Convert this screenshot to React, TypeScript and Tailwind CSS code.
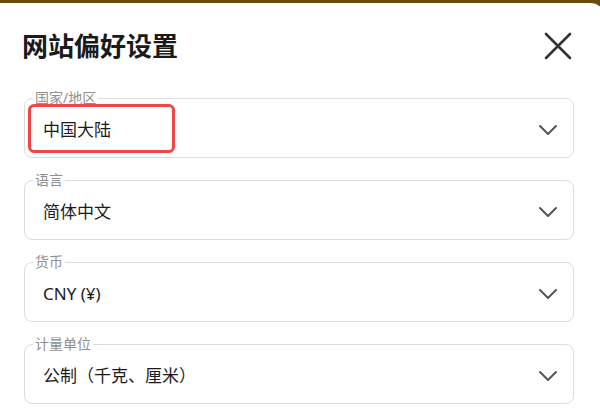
import React from 'react';

type Field = {
  label: string;
  value: string;
  highlight?: boolean;
};

const fields: Field[] = [
  { label: '国家/地区', value: '中国大陆', highlight: true },
  { label: '语言', value: '简体中文' },
  { label: '货币', value: 'CNY (¥)' },
  { label: '计量单位', value: '公制（千克、厘米）' },
];

const Chevron = () => (
  <svg width="20" height="12" viewBox="0 0 20 12" fill="none">
    <path d="M2 2 L10 10 L18 2" stroke="#555" strokeWidth="2" strokeLinecap="round" strokeLinejoin="round" />
  </svg>
);

const CloseIcon = () => (
  <svg width="28" height="28" viewBox="0 0 28 28" fill="none">
    <path d="M2 2 L26 26 M26 2 L2 26" stroke="#333" strokeWidth="2.6" strokeLinecap="round" />
  </svg>
);

const SelectField: React.FC<{ field: Field }> = ({ field }) => (
  <fieldset className="border border-[#dcdcdc] rounded-lg px-[8px]">
    <legend className="px-[2px] text-[14px] leading-[16px] text-[#8f8f8f]">{field.label}</legend>
    <div className="relative h-[51px] pb-[3px] pl-[10px] pr-[7px] flex items-center justify-between">
      {field.highlight && (
        <div className="absolute -top-[2px] -left-[5px] w-[147px] h-[49px] border-[3px] border-[#ef4646] rounded-[6px] pointer-events-none" />
      )}
      <span className="text-[17px] text-[#1c1c1c]">{field.value}</span>
      <Chevron />
    </div>
  </fieldset>
);

export default function App() {
  return (
    <div
      className="w-[600px] h-[410px] overflow-hidden bg-[#6b4a0e] pt-[3px]"
      style={{ fontFamily: '"Noto Sans", "Noto Sans CJK SC", sans-serif' }}
    >
      <div className="ml-[-20px] mr-[-6px] h-[420px] bg-white rounded-t-[16px] pl-[44px] pr-[32px] pt-[27px]">
        {/* Header */}
        <div className="h-[32px] flex items-center justify-between">
          <h1 className="-ml-[2px] text-[26px] font-bold text-[#1a1a1a] leading-none">网站偏好设置</h1>
          <button className="mr-[2px]">
            <CloseIcon />
          </button>
        </div>

        <div className="mt-[28px] flex flex-col gap-[14px]">
          {fields.map((f) => (
            <SelectField key={f.label} field={f} />
          ))}
        </div>
      </div>
    </div>
  );
}
